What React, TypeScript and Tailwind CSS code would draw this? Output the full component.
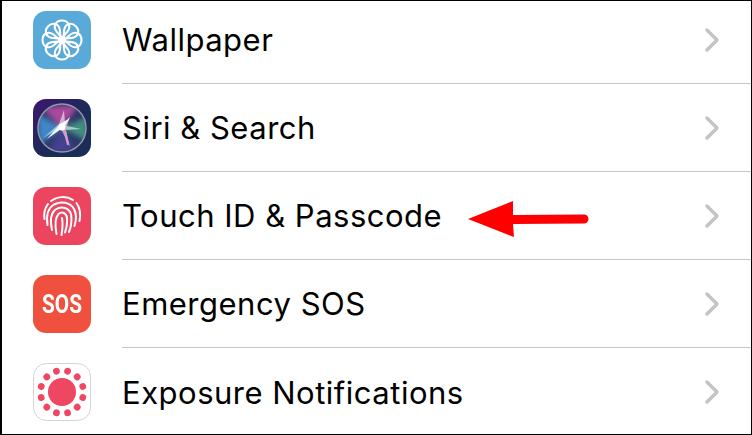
import React from "react";

// Settings list: 88px rows, separators start under the label.
function Wallpaper() {
  const petals = [0, 45, 90, 135, 180, 225, 270, 315];
  return (
    <svg viewBox="0 0 58 58" className="h-full w-full">
      <rect width="58" height="58" rx="13" fill="#59a9d9" />
      <g fill="none" stroke="#fff" strokeWidth="2.1">
        {petals.map((a) => (
          <path
            key={a}
            d="M29 27 L23.500 20.500 C19.500 15 23 9.500 29 9.500 C35 9.500 38.500 15 34.500 20.500 Z"
            transform={`rotate(${a} 29 29)`}
          />
        ))}
      </g>
      <circle cx="29" cy="29" r="3.2" fill="#fff" />
    </svg>
  );
}

function Siri() {
  return (
    <svg viewBox="0 0 58 58" className="h-full w-full">
      <defs>
        <linearGradient id="siriBg" x1="0" y1="0" x2="1" y2="1">
          <stop offset="0" stopColor="#3d1670" />
          <stop offset="0.55" stopColor="#1c2a58" />
          <stop offset="1" stopColor="#1b2d55" />
        </linearGradient>
        <filter id="soft" x="-30%" y="-30%" width="160%" height="160%">
          <feGaussianBlur stdDeviation="2.4" />
        </filter>
        <filter id="softer" x="-30%" y="-30%" width="160%" height="160%">
          <feGaussianBlur stdDeviation="0.7" />
        </filter>
        <clipPath id="orb">
          <circle cx="29" cy="29" r="24" />
        </clipPath>
      </defs>
      <rect width="58" height="58" rx="13" fill="url(#siriBg)" />
      <circle cx="29" cy="29" r="24" fill="#2c3768" />
      <g clipPath="url(#orb)">
        <g filter="url(#soft)">
          <path d="M29 29 L8 8 L46 6 Z" fill="#a9489c" />
          <path d="M29 29 L4 14 L6 46 Z" fill="#3f86c8" />
          <path d="M29 29 L54 18 L54 42 Z" fill="#3f8f80" />
          <path d="M29 29 L14 54 L44 54 Z" fill="#45418f" />
        </g>
        <g filter="url(#softer)">
          <path d="M30 27 L10 39 L26 25 L31 11 L32 24 L37 17 L34 27 L48 30 L33 31 L37 48 L29 32 Z" fill="#fff" opacity="0.55" />
          <path d="M31 28 L14 40 L27 25 L37 19 Z" fill="#ecfbfb" />
          <path d="M30 30 L34 46 L36 46 L32 29 Z" fill="#d99ac8" />
          <circle cx="29" cy="28" r="3.5" fill="#fff" />
        </g>
      </g>
      <circle cx="29" cy="29" r="24" fill="none" stroke="#8f9aa6" strokeWidth="1.5" />
    </svg>
  );
}

function TouchId() {
  return (
    <svg viewBox="0 0 58 58" className="h-full w-full">
      <rect width="58" height="58" rx="13" fill="#ec4560" />
      <g fill="none" stroke="#fff" strokeWidth="2" strokeLinecap="round">
        <path d="M11.500 32 C10.500 26 12 21 15 17" />
        <path d="M18 14 C25 9 34 9 40 13" />
        <path d="M43.500 16 C47 21 48 27 46.500 34" />
        <path d="M14.500 38 C13 28 15 21 21 17.500 C28 14 37 15 41 22 C43.500 27 43.500 33 41.500 39" />
        <path d="M19 43 C17 34 18 26 22.500 22.500 C29 18.500 36 21 38 27 C39 33 38 40 36 45" />
        <path d="M23.500 47 C22 39 22 31 25.500 27 C29 24 33.500 26 34 31 C34.500 36 33.500 41 32 45.500" />
        <path d="M28.500 48 C29.500 42 30 36 29 31" />
      </g>
    </svg>
  );
}

function Sos() {
  return (
    <div className="flex h-full w-full items-center justify-center rounded-[13px] bg-[#f0513f] font-['Roboto',sans-serif] text-[26px] font-bold text-white">
      <span className="scale-x-[0.8] leading-none">SOS</span>
    </div>
  );
}

function Exposure() {
  const dots = [-75, -45, -15, 15, 45, 75, 105, 135, 165, 195, 225, 255];
  return (
    <svg viewBox="0 0 58 58" className="h-full w-full">
      <rect x="0.5" y="0.5" width="57" height="57" rx="13" fill="#fff" stroke="#d4d4d4" />
      <circle cx="29" cy="29" r="14" fill="#ee4762" />
      {dots.map((a) => (
        <circle key={a} cx="29" cy="7.5" r="3.4" fill="#ee4762" transform={`rotate(${a + 90} 29 29)`} />
      ))}
    </svg>
  );
}

const rows = [
  { label: "Wallpaper", icon: <Wallpaper /> },
  { label: "Siri & Search", icon: <Siri /> },
  { label: "Touch ID & Passcode", icon: <TouchId /> },
  { label: "Emergency SOS", icon: <Sos /> },
  { label: "Exposure Notifications", icon: <Exposure /> },
];

export default function App() {
  return (
    <div className="relative h-[435px] w-[752px] overflow-hidden border border-l-2 border-black bg-white font-['Inter',sans-serif] text-black">
      <div className="-mt-[5px] flex flex-col">
        {rows.map((r, i) => (
          <div key={r.label} className="flex h-[88px] items-center pl-[31px]">
            <div className="h-[58px] w-[58px] shrink-0">{r.icon}</div>
            <div
              className={`ml-[31px] flex h-full flex-1 items-center pr-[32px] ${i < rows.length - 1 ? "border-b border-[#c6c6c8]" : ""}`}
            >
              <span className="flex-1 text-[31px] leading-none tracking-[0.5px]">{r.label}</span>
              <svg width="14" height="24" viewBox="0 0 14 24" fill="none">
                <path d="M2 2 L12 12 L2 22" stroke="#c4c4c7" strokeWidth="3.4" strokeLinecap="round" strokeLinejoin="round" />
              </svg>
            </div>
          </div>
        ))}
      </div>
      {/* red annotation arrow over the Touch ID row */}
      <svg className="absolute left-[464px] top-[199px]" width="124" height="40" viewBox="0 0 124 40">
        <path d="M2 19 L47 1 L47 15 L118 14.500 A4.500 4.500 0 0 1 118 23.500 L47 24 L48 37 Z" fill="#ff0000" />
      </svg>
    </div>
  );
}
